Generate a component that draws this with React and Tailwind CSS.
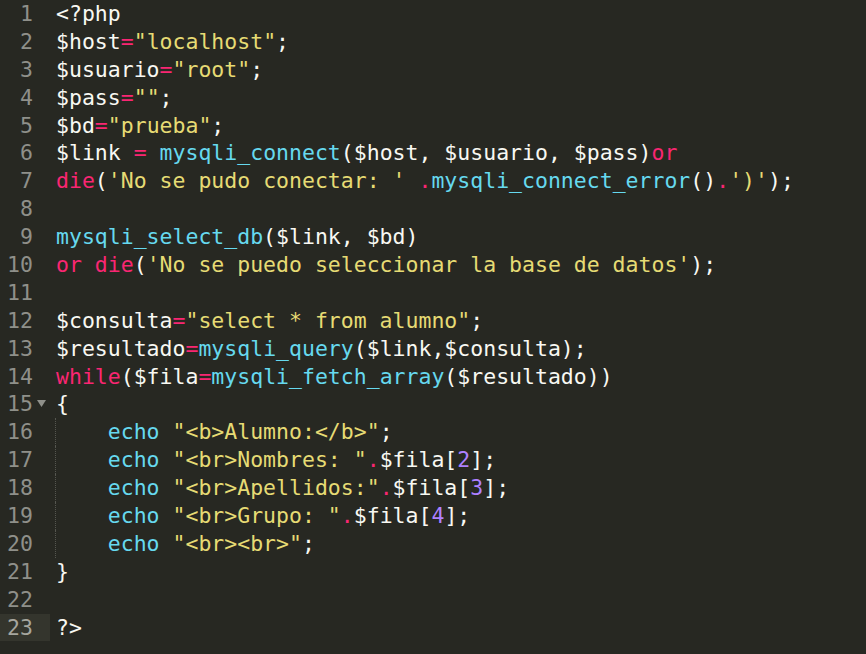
import React from 'react'

const W = 'text-[#f8f8f2]'
const Y = 'text-[#e6db74]'
const P = 'text-[#f92672]'
const C = 'text-[#66d9ef]'
const N = 'text-[#ae81ff]'

// each line: list of [text, color]
const lines = [
  [['<?php', W]],
  [['$host', W], ['=', P], ['"localhost"', Y], [';', W]],
  [['$usuario', W], ['=', P], ['"root"', Y], [';', W]],
  [['$pass', W], ['=', P], ['""', Y], [';', W]],
  [['$bd', W], ['=', P], ['"prueba"', Y], [';', W]],
  [['$link ', W], ['=', P], [' ', W], ['mysqli_connect', C], ['($host, $usuario, $pass)', W], ['or', P]],
  [['die', P], ['(', W], ["'No se pudo conectar: '", Y], [' ', W], ['.', P], ['mysqli_connect_error', C], ['()', W], ['.', P], ["')'", Y], [');', W]],
  [],
  [['mysqli_select_db', C], ['($link, $bd)', W]],
  [['or die', P], ['(', W], ["'No se puedo seleccionar la base de datos'", Y], [');', W]],
  [],
  [['$consulta', W], ['=', P], ['"select * from alumno"', Y], [';', W]],
  [['$resultado', W], ['=', P], ['mysqli_query', C], ['($link,$consulta);', W]],
  [['while', P], ['($fila', W], ['=', P], ['mysqli_fetch_array', C], ['($resultado))', W]],
  [['{', W]],
  [['    ', W], ['echo', C], [' ', W], ['"<b>Alumno:</b>"', Y], [';', W]],
  [['    ', W], ['echo', C], [' ', W], ['"<br>Nombres: "', Y], ['.', P], ['$fila[', W], ['2', N], ['];', W]],
  [['    ', W], ['echo', C], [' ', W], ['"<br>Apellidos:"', Y], ['.', P], ['$fila[', W], ['3', N], ['];', W]],
  [['    ', W], ['echo', C], [' ', W], ['"<br>Grupo: "', Y], ['.', P], ['$fila[', W], ['4', N], ['];', W]],
  [['    ', W], ['echo', C], [' ', W], ['"<br><br>"', Y], [';', W]],
  [['}', W]],
  [],
  [['?>', W]],
]

const App = () => {
  return (
    <div
      className="w-[866px] h-[654px] bg-[#272822] overflow-hidden text-[21.5px]"
      style={{ fontFamily: '"DejaVu Sans Mono", "Liberation Mono", monospace' }}
    >
      {lines.map((tokens, i) => {
        const n = i + 1
        const current = n === 23
        const guide = n >= 16 && n <= 20
        return (
          <div key={n} className="flex items-center h-[27.9px] leading-[27.9px]">
            {/* gutter */}
            <div className={`flex items-center w-[50px] h-full ${current ? 'bg-[#34352d]' : ''}`}>
              <span className={`w-[33px] text-right ${current ? 'text-[#a6a69e]' : 'text-[#8f908a]'}`}>{n}</span>
              {n === 15 && (
                <svg width="9" height="8" viewBox="0 0 9 8" className="ml-[4px]">
                  <path d="M0 0 L9 0 L4.5 7 Z" fill="#8f908a" />
                </svg>
              )}
            </div>
            <div className="w-[5px]" />
            {/* code */}
            <div
              className={`h-full pl-0 border-l whitespace-pre ${
                guide ? 'border-dotted border-[#55564f]' : 'border-transparent'
              }`}
            >
              {tokens.map(([t, c], j) => (
                <span key={j} className={c}>{t}</span>
              ))}
            </div>
          </div>
        )
      })}
    </div>
  )
}

export default App
